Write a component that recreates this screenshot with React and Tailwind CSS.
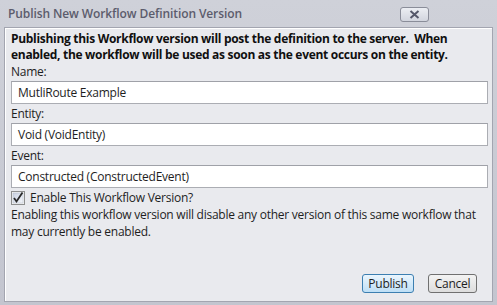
import React from "react";

export default function App() {
  const font = { fontFamily: '"Segoe UI", "Open Sans", "Noto Sans", sans-serif' };
  return (
    <div
      className="w-[497px] h-[305px] bg-gradient-to-b from-[#cfd1d9] to-[#c3c5cf] relative overflow-hidden text-[#1e1e1e] tracking-[-0.25px]"
      style={font}
    >
      <div className="h-[27px] flex items-start">
        <div className="pl-[8px] pt-[6px] text-[12px] font-semibold text-[#5c5c6c] leading-[16px] flex-1 tracking-[-0.1px]">
          Publish New Workflow Definition Version
        </div>
        <div className="mt-[7px] mr-[68px] w-[29px] h-[15px] border border-[#8a8d99] rounded-[3px] bg-gradient-to-b from-[#eceef3] to-[#d2d5de] flex items-center justify-center">
          <svg width="11" height="9" viewBox="0 0 11 9">
            <path d="M1.5 1 L9.5 8 M9.5 1 L1.5 8" stroke="#55586a" strokeWidth="2" />
          </svg>
        </div>
      </div>
      <div className="ml-[4px] w-[489px] h-[275px] bg-[#e9eaee] border border-[#a3a5b0] shadow-[inset_1px_1px_0_#ffffff] px-[6px] pt-[3px] flex flex-col">
        <div className="text-[12px] font-bold leading-[16px] tracking-[-0.3px] text-[#101010]">
          Publishing this Workflow version will post the definition to the server.&nbsp; When enabled, the workflow will be used as soon as the event occurs on the entity.
        </div>
        <div className="text-[12px] leading-[16px] mt-[1px]">Name:</div>
        <div className="mt-[1px] w-[477px] h-[23px] bg-white border border-[#abadb3] border-t-[#9fa1a8] flex items-center pl-[6px] text-[12px]">
          MutliRoute Example
        </div>
        <div className="text-[12px] leading-[16px] mt-[2px]">Entity:</div>
        <div className="mt-[1px] w-[477px] h-[23px] bg-white border border-[#abadb3] border-t-[#9fa1a8] flex items-center pl-[6px] text-[12px]">
          Void (VoidEntity)
        </div>
        <div className="text-[12px] leading-[16px] mt-[2px]">Event:</div>
        <div className="mt-[1px] w-[477px] h-[23px] bg-white border border-[#abadb3] border-t-[#9fa1a8] flex items-center pl-[6px] text-[12px]">
          Constructed (ConstructedEvent)
        </div>
        <div className="flex items-center mt-[2px] h-[15px]">
          <svg width="14" height="14" viewBox="0 0 14 14" className="shrink-0">
            <defs>
              <linearGradient id="cb" x1="0" y1="0" x2="1" y2="1">
                <stop offset="0" stopColor="#cbd3e3" />
                <stop offset="1" stopColor="#f4f6fa" />
              </linearGradient>
            </defs>
            <rect x="0.5" y="0.5" width="13" height="13" fill="#f5f5f5" stroke="#8e8f8f" />
            <rect x="2" y="2" width="10" height="10" fill="url(#cb)" stroke="#b0b8c8" strokeWidth="0.5" />
            <path d="M3 7 L5.5 10.5 L11.5 1.5" fill="none" stroke="#2a2a2a" strokeWidth="1.8" />
          </svg>
          <span className="ml-[5px] text-[12px] leading-[16px]">Enable This Workflow Version?</span>
        </div>
        <div className="text-[12px] leading-[17px] mt-[1px]">
          Enabling this workflow version will disable any other version of this same workflow that may currently be enabled.
        </div>
        <div className="flex-1" />
        <div className="flex justify-end gap-[14px] pr-[9px] mb-[8px]">
          <div className="w-[52px] h-[19px] rounded-[3px] border border-[#3c7fb1] bg-gradient-to-b from-[#eaf5fd] to-[#bedff6] flex items-center justify-center text-[12px]">
            Publish
          </div>
          <div className="w-[49px] h-[19px] rounded-[3px] border border-[#707070] bg-gradient-to-b from-[#f3f3f3] to-[#dddddd] flex items-center justify-center text-[12px]">
            Cancel
          </div>
        </div>
      </div>
    </div>
  );
}
